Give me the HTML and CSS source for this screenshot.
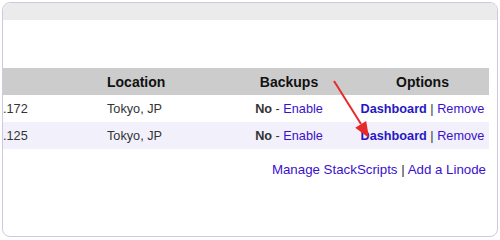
FILE: index.html
```html
<!DOCTYPE html>
<html>
<head>
<meta charset="utf-8">
<link rel="stylesheet" href="styles.css">
</head>
<body>
<div class="panel">
  <div class="panel-top"></div>
  <div class="panel-body">
    <table class="linodes">
      <colgroup>
        <col class="c-ip"><col class="c-loc"><col class="c-bak"><col class="c-opt">
      </colgroup>
      <thead>
        <tr>
          <th class="ip"></th>
          <th class="loc">Location</th>
          <th class="center">Backups</th>
          <th class="center">Options</th>
        </tr>
      </thead>
      <tbody>
        <tr>
          <td class="ip">.172</td>
          <td class="loc">Tokyo, JP</td>
          <td class="center"><b>No</b> - <a href="#">Enable</a></td>
          <td class="center"><a href="#" class="strong">Dashboard</a> | <a href="#">Remove</a></td>
        </tr>
        <tr class="alt">
          <td class="ip">.125</td>
          <td class="loc">Tokyo, JP</td>
          <td class="center"><b>No</b> - <a href="#">Enable</a></td>
          <td class="center"><a href="#" class="strong">Dashboard</a> | <a href="#">Remove</a></td>
        </tr>
      </tbody>
    </table>
    <div class="actions"><a href="#">Manage StackScripts</a> | <a href="#">Add a Linode</a></div>
  </div>
  <svg class="arrow" width="60" height="70" viewBox="0 0 60 70">
    <line x1="3" y1="3" x2="30" y2="46" stroke="#e62a2a" stroke-width="2"/>
    <polygon points="38,60 35.2,42.9 24.2,49.7" fill="#e62a2a"/>
  </svg>
</div>
</body>
</html>
```
FILE: styles.css
```css
html, body {
  margin: 0;
  padding: 0;
  background: #ffffff;
}
body {
  font-family: "Liberation Sans", Arial, sans-serif;
  font-size: 12.7px;
  color: #333333;
}
.panel {
  position: relative;
  box-sizing: border-box;
  margin: 2px 0 0 2px;
  width: 496px;
  height: 235px;
  border: 1px solid #cdc9df;
  border-radius: 8px;
  overflow: hidden;
  background: #ffffff;
}
.panel-top {
  height: 17px;
  background: #ebebeb;
}
.panel-body {
  padding: 48px 7px 0 0;
}
.linodes {
  width: 486px;
  border-collapse: collapse;
  table-layout: fixed;
}
.c-ip { width: 97px; }
.c-loc { width: 122px; }
.c-bak { width: 134px; }
.c-opt { width: 133px; }
.linodes th {
  height: 27px;
  padding: 0;
  background: #cccccc;
  color: #111111;
  font-size: 14px;
  font-weight: bold;
  text-align: left;
}
.linodes td {
  height: 27px;
  padding: 0;
  white-space: nowrap;
  overflow: hidden;
}
.linodes .loc { padding-left: 7px; }
.linodes .center { text-align: center; }
.linodes tr.alt td { background: #f2f1fb; }
.linodes b { color: #333333; }
a {
  color: #3a10cc;
  text-decoration: none;
}
a.strong {
  font-weight: bold;
  color: #2618c4;
}
.actions {
  margin-top: 13px;
  font-size: 13.3px;
  text-align: right;
  padding-right: 4px;
}
.arrow {
  position: absolute;
  left: 328px;
  top: 75px;
}
```
